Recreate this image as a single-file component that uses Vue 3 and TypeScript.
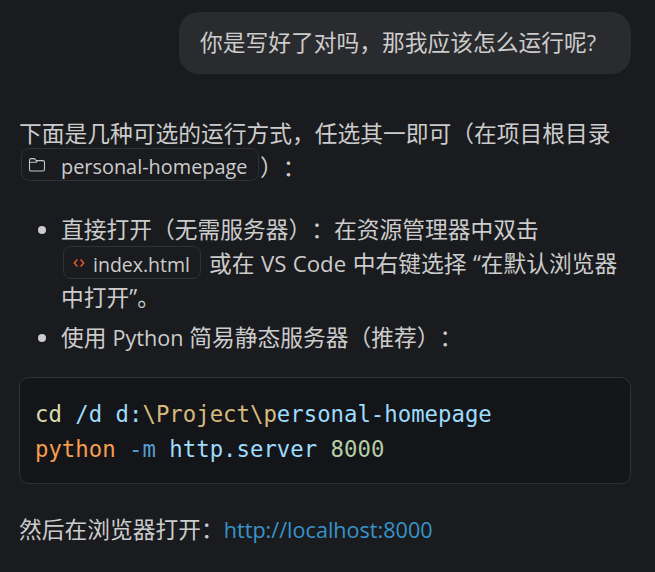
<script setup lang="ts">
const url: string = 'http://localhost:8000'
</script>

<template>
  <main class="page">
    <div class="user-row"><div class="bubble">你是写好了对吗，那我应该怎么运行呢<span class="lat">?</span></div></div>
    <p class="intro">下面是几种可选的运行方式，任选其一即可（在项目根目录 <span class="chip folder-chip"><svg width="18" height="16" viewBox="0 0 18 16" fill="none"><path d="M1.500 3.200c0-.9.7-1.600 1.600-1.600h3.200l2 2h6.600c.9 0 1.600.7 1.600 1.600v7.200c0 .9-.7 1.600-1.600 1.600H3.100c-.9 0-1.600-.7-1.600-1.600z M1.500 5.200h6.800l1.300-1.500" stroke="#c5c5c5" stroke-width="1.100"/></svg><span>personal-homepage</span></span><span class="after-chip">）：</span></p>
    <ul class="list">
      <li class="spaced">直接打开（无需服务器）：在资源管理器中双击 <span class="chip file-chip"><svg width="12" height="12" viewBox="0 0 12 12" fill="none"><path d="M4.400 2.500 1.300 6l3.100 3.500M7.600 2.500 10.700 6 7.600 9.500" stroke="#e2592a" stroke-width="1.500"/></svg><span>index.html</span></span> 或在 <span class="lat-wide">VS Code</span> 中右键选择 “在默认浏览器中打开”。</li>
      <li>使用 <span class="lat">Python</span> 简易静态服务器（推荐）：</li>
    </ul>
    <pre class="code"><code><span class="yellow">cd</span> <span class="blue">/d d:</span><span class="gold">\Project\</span><span class="gold-p">p</span><span class="blue">ersonal-homepage</span>
<span class="orange">python</span> <span class="deep">-m</span> <span class="blue">http.server</span> <span class="green">8000</span></code></pre>
    <p class="last">然后在浏览器打开：<a class="lat" :href="url">{{ url }}</a></p>
  </main>
</template>

<style scoped>
.page {
  box-sizing: border-box;
  width: 655px;
  height: 572px;
  overflow: hidden;
  padding: 12px 24px 0 19px;
  background: #1a1b1e;
  color: #cccccc;
  font-family: "Open Sans", "Noto Sans CJK SC", sans-serif;
  font-size: 22.75px;
  line-height: 34px;
  text-spacing-trim: space-all;
}
.lat { font-size: 21.600px; }
.lat-wide { font-size: 22.200px; }
.user-row { display: flex; justify-content: flex-end; }
.bubble {
  width: 452px;
  box-sizing: border-box;
  height: 62px;
  padding: 14px 21px;
  border-radius: 20px;
  background: #2a2b2e;
  white-space: nowrap;
}
.intro { margin: 43px 0 0; }
.chip {
  display: inline-flex;
  align-items: center;
  box-sizing: border-box;
  height: 33px;
  margin-block: -9px -3px;
  padding-top: 5px;
  vertical-align: 3px;
  border: 1px solid #303134;
  border-radius: 8px;
  font-size: 19.900px;
  line-height: 26px;
  word-spacing: 0;
  white-space: nowrap;
}
.chip svg { margin-top: -4px; }
.folder-chip { width: 238px; margin-left: 2px; padding-left: 6px; gap: 15px; }
.file-chip { width: 138px; margin: -9px 1.500px -3px 2px; padding-left: 9px; gap: 8px; font-size: 19.500px; }
.after-chip { margin-left: 1px; }
.spaced { word-spacing: 0.600px; }
.list { margin: 28px 0 0; padding: 0 0 0 42px; }
.list li + li { margin-top: 6px; }
.list li::marker { color: #cccccc; }
.code {
  margin: 22px 0 0;
  height: 107px;
  box-sizing: border-box;
  padding: 19px 15px;
  border: 1px solid #303134;
  border-radius: 10px;
  background: #141518;
  font-family: "DejaVu Sans Mono", monospace;
  font-size: 22.320px;
  line-height: 35px;
  overflow: hidden;
}
.code code { font: inherit; }
.yellow { color: #dcdcaa; }
.blue { color: #9cdcfe; }
.gold, .gold-p { color: #d7ba7d; }
.orange { color: #f69d50; }
.deep { color: #569cd6; }
.green { color: #b5cea8; }
.last { margin: 29px 0 0; }
a { color: #3794c8; text-decoration: none; }
</style>

<style>
body { margin: 0; background: #1a1b1e; }
</style>
